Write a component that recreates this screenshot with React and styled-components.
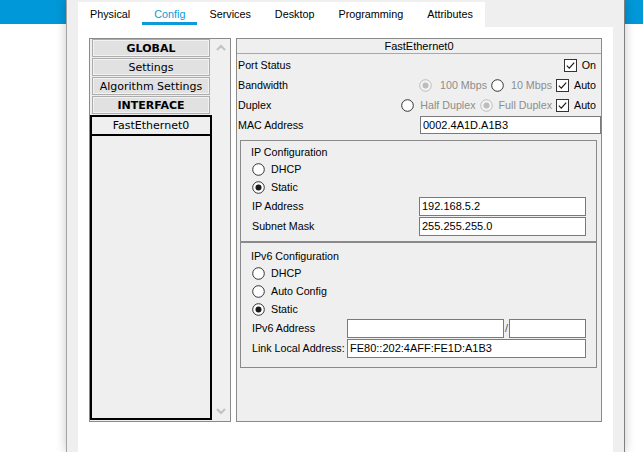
import React from 'react'
import styled, { createGlobalStyle } from 'styled-components'

const GlobalStyle = createGlobalStyle`
  html, body {
    margin: 0;
    padding: 0;
    background: #fff;
    overflow: hidden;
  }
  body {
    font-family: "Liberation Sans", Arial, sans-serif;
    font-size: 11px;
    color: #000;
  }
`

const Backdrop = styled.div`
  display: flex;
  height: 452px;
  padding-left: 66px;
  background: linear-gradient(to bottom, #0098d8 0, #0098d8 24px, #fff 24px);
  overflow: hidden;
`

const Window = styled.div`
  width: 559px;
  box-sizing: border-box;
  display: flex;
  flex-direction: column;
  padding: 2px 11px 0 11px;
  background: #efefef;
  border-left: 1px solid #a4a4a4;
  border-right: 1px solid #808080;
  box-shadow: 0 0 10px rgba(0, 0, 0, 0.22);
`

const TabStrip = styled.div`
  display: flex;
  align-self: flex-start;
  background: #fff;
  padding-bottom: 2px;
`

const Tab = styled.div`
  padding: 4px 12px 0 12px;
  line-height: 16px;
  font-size: 10.8px;
  color: ${p => (p.active ? '#0e9ad6' : '#000')};
  border-bottom: 3px solid ${p => (p.active ? '#0e9ad6' : 'transparent')};
`

const Content = styled.div`
  flex: 1;
  display: flex;
  gap: 5px;
  align-items: flex-start;
  background: #fff;
  padding: 11px;
`

const ListBox = styled.div`
  width: 142px;
  height: 384px;
  box-sizing: border-box;
  display: flex;
  border: 1px solid #8a8a8a;
  background: #efefef;
`

const ItemsCol = styled.div`
  width: 122px;
  display: flex;
  flex-direction: column;
`

const NavButton = styled.div`
  height: 18px;
  margin: 0 2px 1px 2px;
  box-sizing: border-box;
  border: 1px solid #adadad;
  box-shadow: inset 0 0 0 1px #f2f2f2;
  background: #e1e1e1;
  font-family: "DejaVu Sans", Verdana, sans-serif;
  font-size: 11px;
  font-weight: ${p => (p.bold ? 'bold' : 'normal')};
  display: flex;
  align-items: center;
  justify-content: center;
  white-space: nowrap;
`

const InterfaceBox = styled.div`
  flex: 1;
  border: 2px solid #000;
  margin-bottom: 1px;
`

const InterfaceItem = styled.div`
  height: 17px;
  border-bottom: 2px solid #000;
  font-family: "DejaVu Sans", Verdana, sans-serif;
  font-size: 11px;
  display: flex;
  align-items: center;
  justify-content: center;
`

const ScrollBar = styled.div`
  flex: 1;
  display: flex;
  flex-direction: column;
  justify-content: space-between;
  align-items: center;
  padding: 5px 0 6px 0;
  background: #f0f0f0;
`

const Panel = styled.div`
  width: 366px;
  height: 384px;
  box-sizing: border-box;
  border: 1px solid #8a8a8a;
  background: #efefef;
`

const PanelHeader = styled.div`
  height: 14px;
  line-height: 14px;
  text-align: center;
  border-bottom: 1px solid #a8a8a8;
  margin-bottom: 1px;
`

const Row = styled.div`
  height: ${p => p.h || 20}px;
  display: flex;
  align-items: center;
  padding-left: 1px;
  padding-right: ${p => p.pr || 0}px;
`

const Label = styled.div`
  width: ${p => (p.w ? `${p.w}px` : 'auto')};
  flex-shrink: 0;
  white-space: nowrap;
  font-size: 10.7px;
`

const Controls = styled.div`
  flex: 1;
  display: flex;
  align-items: center;
  justify-content: flex-end;
`

const Option = styled.div`
  display: flex;
  align-items: center;
  margin-left: ${p => p.ml || 0}px;
  color: ${p => (p.disabled ? '#8d8d8d' : '#000')};
  white-space: nowrap;
  font-size: 10.7px;
`

const Mark = styled.svg`
  flex-shrink: 0;
  margin-right: ${p => p.gap}px;
`

const Field = styled.div`
  flex: ${p => (p.w ? 'none' : 1)};
  width: ${p => (p.w ? `${p.w}px` : 'auto')};
  height: ${p => p.h || 19}px;
  box-sizing: border-box;
  border: 1px solid #7a7a7a;
  background: #fff;
  padding-left: 2px;
  display: flex;
  align-items: center;
  font-size: 11px;
  white-space: nowrap;
`

const Slash = styled.div`
  width: 5px;
  text-align: center;
  font-size: 11px;
  color: #555;
`

const Group = styled.div`
  margin: ${p => p.mt}px 4px 0 3px;
  border: 1px solid #8a8a8a;
  padding: ${p => p.pt}px 10px ${p => p.pb}px 10px;
`

const GroupTitle = styled.div`
  height: 15px;
  line-height: 15px;
  font-size: 10.7px;
`

const Radio = ({ checked, disabled, gap = 6 }) => (
  <Mark width="13" height="13" viewBox="0 0 13 13" gap={gap}>
    <circle cx="6.5" cy="6.5" r="5.8" fill={disabled ? '#f3f3f3' : '#fff'} stroke={disabled ? '#bdbdbd' : '#333'} strokeWidth="1" />
    {checked && <circle cx="6.5" cy="6.5" r="3" fill={disabled ? '#bdbdbd' : '#1a1a1a'} />}
  </Mark>
)

const Check = ({ gap = 5 }) => (
  <Mark width="13" height="13" viewBox="0 0 13 13" gap={gap}>
    <rect x="0.5" y="0.5" width="12" height="12" fill="#fff" stroke="#333" />
    <path d="M2.8 6.6 L5.3 9.1 L10.2 3.6" fill="none" stroke="#111" strokeWidth="1.1" />
  </Mark>
)

const Chevron = ({ up }) => (
  <svg width="10" height="7" viewBox="0 0 10 7">
    <polyline points={up ? '1,6 5,2 9,6' : '1,1 5,5 9,1'} fill="none" stroke="#c2c2c2" strokeWidth="2" />
  </svg>
)

const tabs = ['Physical', 'Config', 'Services', 'Desktop', 'Programming', 'Attributes']

const App = () => (
  <>
    <GlobalStyle />
    <Backdrop>
      <Window>
        <TabStrip>
          {tabs.map(t => (
            <Tab key={t} active={t === 'Config'}>{t}</Tab>
          ))}
        </TabStrip>
        <Content>
          <ListBox>
            <ItemsCol>
              <NavButton bold>GLOBAL</NavButton>
              <NavButton>Settings</NavButton>
              <NavButton>Algorithm Settings</NavButton>
              <NavButton bold>INTERFACE</NavButton>
              <InterfaceBox>
                <InterfaceItem>FastEthernet0</InterfaceItem>
              </InterfaceBox>
            </ItemsCol>
            <ScrollBar>
              <Chevron up />
              <Chevron />
            </ScrollBar>
          </ListBox>

          <Panel>
            <PanelHeader>FastEthernet0</PanelHeader>
            <Row pr={5}>
              <Label>Port Status</Label>
              <Controls>
                <Option><Check />On</Option>
              </Controls>
            </Row>
            <Row pr={5}>
              <Label>Bandwidth</Label>
              <Controls>
                <Option disabled><Radio checked disabled gap={8} />100 Mbps</Option>
                <Option disabled ml={4}><Radio gap={7} />10 Mbps</Option>
                <Option ml={4}><Check />Auto</Option>
              </Controls>
            </Row>
            <Row pr={5}>
              <Label>Duplex</Label>
              <Controls>
                <Option disabled><Radio gap={6} />Half Duplex</Option>
                <Option disabled ml={4}><Radio checked disabled gap={6} />Full Duplex</Option>
                <Option ml={4}><Check />Auto</Option>
              </Controls>
            </Row>
            <Row>
              <Label w={182}>MAC Address</Label>
              <Field h={18}>0002.4A1D.A1B3</Field>
            </Row>

            <Group mt={5} pt={4} pb={5}>
              <GroupTitle>IP Configuration</GroupTitle>
              <Row h={18}>
                <Option><Radio />DHCP</Option>
              </Row>
              <Row h={18}>
                <Option><Radio checked />Static</Option>
              </Row>
              <Row>
                <Label w={167}>IP Address</Label>
                <Field>192.168.5.2</Field>
              </Row>
              <Row>
                <Label w={167}>Subnet Mask</Label>
                <Field>255.255.255.0</Field>
              </Row>
            </Group>

            <Group mt={0} pt={6} pb={9}>
              <GroupTitle>IPv6 Configuration</GroupTitle>
              <Row h={18}>
                <Option><Radio />DHCP</Option>
              </Row>
              <Row h={18}>
                <Option><Radio />Auto Config</Option>
              </Row>
              <Row h={18}>
                <Option><Radio checked />Static</Option>
              </Row>
              <Row>
                <Label w={95}>IPv6 Address</Label>
                <Field w={157} />
                <Slash>/</Slash>
                <Field />
              </Row>
              <Row>
                <Label w={95}>Link Local Address:</Label>
                <Field>FE80::202:4AFF:FE1D:A1B3</Field>
              </Row>
            </Group>
          </Panel>
        </Content>
      </Window>
    </Backdrop>
  </>
)

export default App
